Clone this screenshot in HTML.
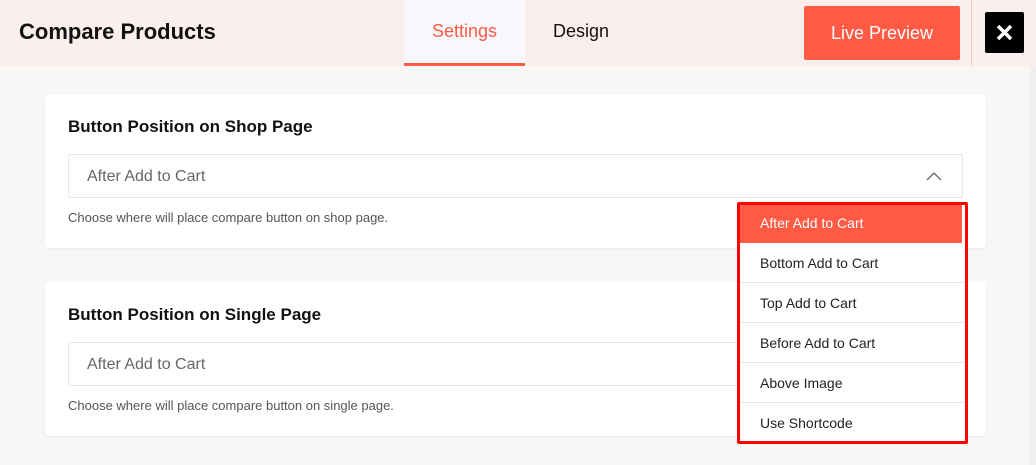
<!DOCTYPE html>
<html><head><style>
*{box-sizing:border-box;margin:0;padding:0}
body{width:1036px;height:465px;overflow:hidden;background:#f8f7f5;font-family:"Liberation Sans",sans-serif;position:relative}
.hdr{position:absolute;left:0;top:0;width:1036px;height:66px;background:#fbefee}
.title{position:absolute;left:19px;top:19px;font-size:22px;font-weight:bold;color:#111}
.tab{position:absolute;top:0;height:66px;line-height:62px;font-size:18px;text-align:center}
.t1{left:404px;width:121px;background:#f7f8fb;color:#ff5a44;border-bottom:3px solid #ff5a44}
.t2{left:525px;width:112px;color:#111}
.lp{position:absolute;left:804px;top:6px;width:156px;height:54px;background:#ff5a44;color:#fff;font-size:18px;text-align:center;line-height:54px;border-radius:2px}
.vl{position:absolute;left:971px;top:0;width:1px;height:66px;background:#f5c8c2}
.x{position:absolute;left:985px;top:12px;width:39px;height:41px;background:#000;border-radius:2px}
.sb{position:absolute;left:1030px;top:66px;width:6px;height:399px;background:#efefef}
.card{position:absolute;left:45px;width:941px;height:154px;background:#fff;border-radius:4px;box-shadow:0 1px 2px rgba(0,0,0,.06)}
.card h3{position:absolute;left:23px;top:23px;font-size:17px;font-weight:bold;color:#111}
.sel{position:absolute;left:23px;top:60px;width:895px;height:44px;border:1px solid #e6e8ec;border-radius:2px;font-size:16px;color:#666;padding:13px 18px}
.hint{position:absolute;left:23px;top:116px;font-size:13px;color:#555}
.dd{position:absolute;left:737px;top:202px;width:231px;height:242px;border:3px solid #f00;background:#fff;border-radius:2px}
.it{height:40px;border-bottom:1px solid #e6e8ec;font-size:14px;color:#222;padding:12px 0 0 20px}
.it.a{background:#ff5a44;color:#fff;height:38px;padding-top:10px;border:none;margin-right:3px}
</style></head><body>
<div class="hdr">
<div class="title">Compare Products</div>
<div class="tab t1">Settings</div><div class="tab t2">Design</div>
<div class="lp">Live Preview</div>
<div class="vl"></div>
<div class="x"><svg width="39" height="41"><path d="M13 14L26 27M26 14L13 27" stroke="#fff" stroke-width="3.5"/></svg></div>
</div>
<div class="sb"></div>
<div class="card" style="top:94px"><h3>Button Position on Shop Page</h3>
<div class="sel">After Add to Cart<svg style="position:absolute;right:20px;top:16px" width="16" height="10"><path d="M1 9L8 2L15 9" stroke="#666" fill="none" stroke-width="1.3"/></svg></div>
<div class="hint">Choose where will place compare button on shop page.</div></div>
<div class="card" style="top:282px"><h3>Button Position on Single Page</h3>
<div class="sel">After Add to Cart</div>
<div class="hint">Choose where will place compare button on single page.</div></div>
<div class="dd">
<div class="it a">After Add to Cart</div>
<div class="it">Bottom Add to Cart</div>
<div class="it">Top Add to Cart</div>
<div class="it">Before Add to Cart</div>
<div class="it">Above Image</div>
<div class="it" style="border:none">Use Shortcode</div>
</div>
</body></html>
